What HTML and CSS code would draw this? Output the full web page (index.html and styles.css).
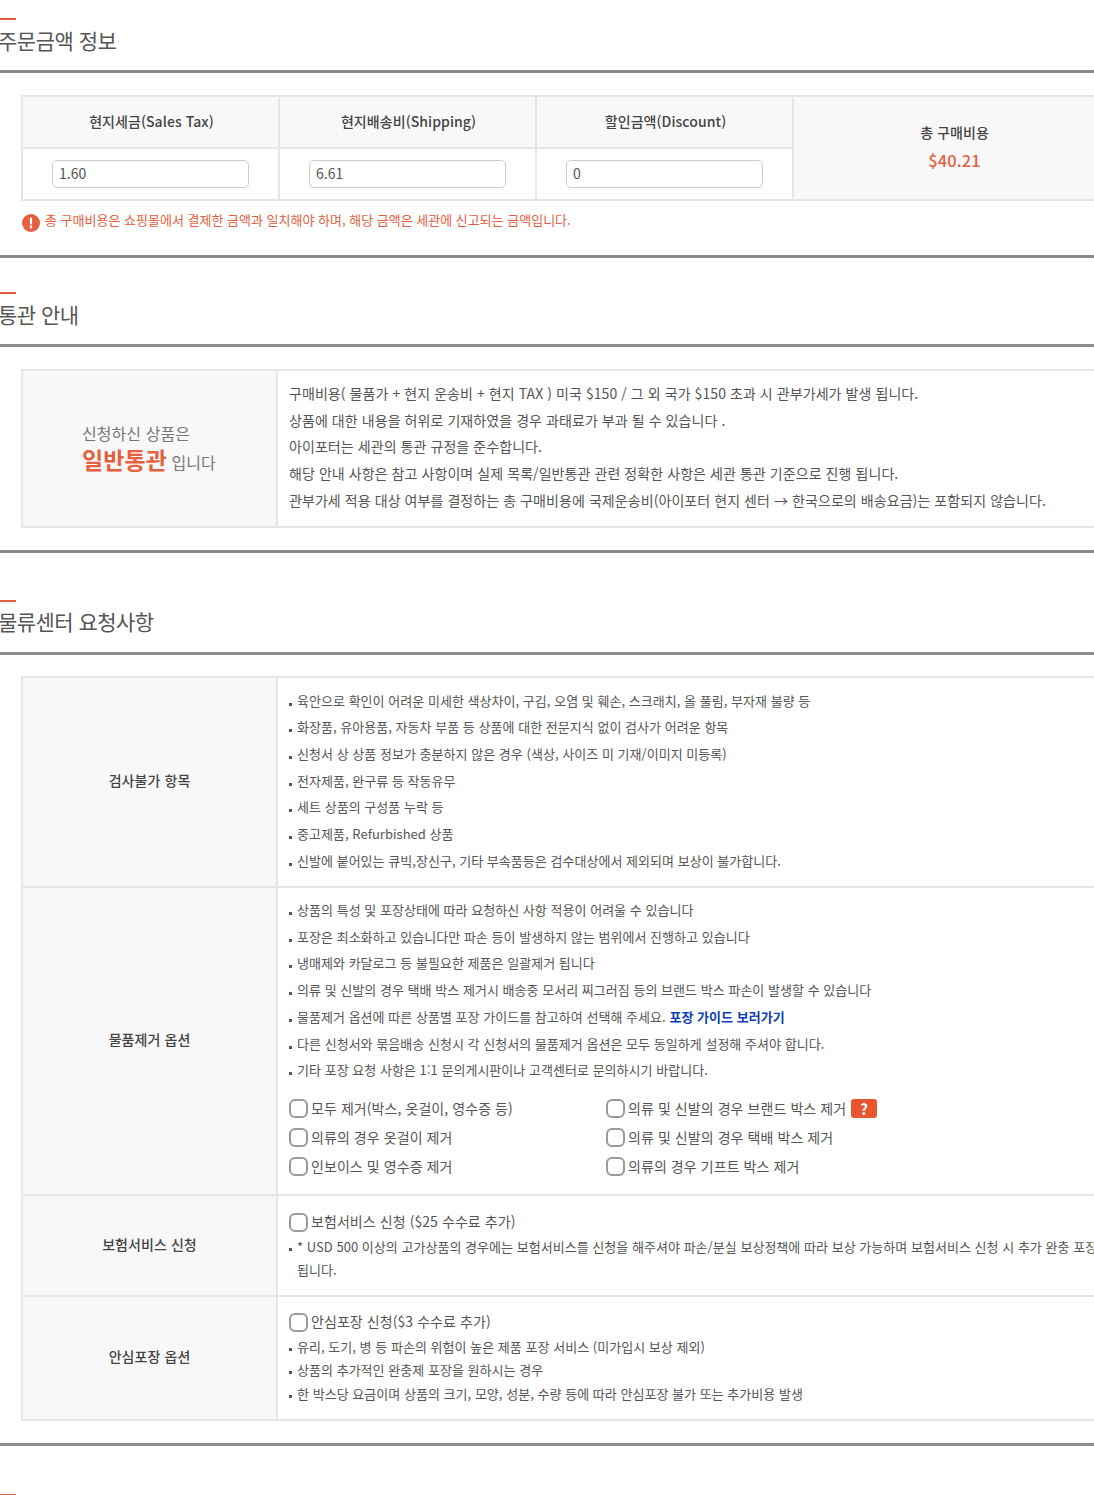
FILE: index.html
```html
<!DOCTYPE html>
<html lang="ko">
<head>
    <meta charset="UTF-8">
    <title>주문금액 정보</title>
    <link rel="stylesheet" href="styles.css">
</head>
<body>
    <div class="container">
        <div class="section section-order">
            <h2 class="title">주문금액 정보</h2>
            <table class="table table-price">
                <tr>
                    <th>현지세금(Sales Tax)</th>
                    <th>현지배송비(Shipping)</th>
                    <th>할인금액(Discount)</th>
                    <th class="total" rowspan="2">
                        <div>총 구매비용</div>
                        <div class="total-price">$40.21</div>
                    </th>
                </tr>
                <tr>
                    <td><input class="text-input" type="text" value="1.60"></td>
                    <td><input class="text-input" type="text" value="6.61"></td>
                    <td><input class="text-input" type="text" value="0"></td>
                </tr>
            </table>
            <p class="notice">
                <svg class="notice-icon" width="18" height="18" viewBox="0 0 18 18">
                    <circle cx="9" cy="9" r="9" fill="#e5603f"/>
                    <rect x="7.9" y="3.6" width="2.2" height="7" rx="1" fill="#fff"/>
                    <circle cx="9" cy="13" r="1.4" fill="#fff"/>
                </svg>
                <span>총 구매비용은 쇼핑몰에서 결제한 금액과 일치해야 하며, 해당 금액은 세관에 신고되는 금액입니다.</span>
            </p>
        </div>

        <div class="section section-customs">
            <h2 class="title">통관 안내</h2>
            <table class="table table-info">
                <tr>
                    <th class="customs">
                        <div class="customs-inner">
                            <div>신청하신 상품은</div>
                            <div><strong>일반통관</strong> <span>입니다</span></div>
                        </div>
                    </th>
                    <td class="customs-text">
                        <p>구매비용( 물품가 + 현지 운송비 + 현지 TAX ) 미국 $150 / 그 외 국가 $150 초과 시 관부가세가 발생 됩니다.</p>
                        <p>상품에 대한 내용을 허위로 기재하였을 경우 과태료가 부과 될 수 있습니다 .</p>
                        <p>아이포터는 세관의 통관 규정을 준수합니다.</p>
                        <p>해당 안내 사항은 참고 사항이며 실제 목록/일반통관 관련 정확한 사항은 세관 통관 기준으로 진행 됩니다.</p>
                        <p>관부가세 적용 대상 여부를 결정하는 총 구매비용에 국제운송비(아이포터 현지 센터 → 한국으로의 배송요금)는 포함되지 않습니다.</p>
                    </td>
                </tr>
            </table>
        </div>

        <div class="section section-request">
            <h2 class="title">물류센터 요청사항</h2>
            <table class="table table-info">
                <tr class="row-inspect">
                    <th>검사불가 항목</th>
                    <td>
                        <ul class="list">
                            <li>육안으로 확인이 어려운 미세한 색상차이, 구김, 오염 및 훼손, 스크래치, 올 풀림, 부자재 불량 등</li>
                            <li>화장품, 유아용품, 자동차 부품 등 상품에 대한 전문지식 없이 검사가 어려운 항목</li>
                            <li>신청서 상 상품 정보가 충분하지 않은 경우 (색상, 사이즈 미 기재/이미지 미등록)</li>
                            <li>전자제품, 완구류 등 작동유무</li>
                            <li>세트 상품의 구성품 누락 등</li>
                            <li>중고제품, Refurbished 상품</li>
                            <li>신발에 붙어있는 큐빅,장신구, 기타 부속품등은 검수대상에서 제외되며 보상이 불가합니다.</li>
                        </ul>
                    </td>
                </tr>
                <tr class="row-remove">
                    <th>물품제거 옵션</th>
                    <td>
                        <ul class="list">
                            <li>상품의 특성 및 포장상태에 따라 요청하신 사항 적용이 어려울 수 있습니다</li>
                            <li>포장은 최소화하고 있습니다만 파손 등이 발생하지 않는 범위에서 진행하고 있습니다</li>
                            <li>냉매제와 카달로그 등 불필요한 제품은 일괄제거 됩니다</li>
                            <li>의류 및 신발의 경우 택배 박스 제거시 배송중 모서리 찌그러짐 등의 브랜드 박스 파손이 발생할 수 있습니다</li>
                            <li>물품제거 옵션에 따른 상품별 포장 가이드를 참고하여 선택해 주세요. <a class="guide-link" href="#">포장 가이드 보러가기</a></li>
                            <li>다른 신청서와 묶음배송 신청시 각 신청서의 물품제거 옵션은 모두 동일하게 설정해 주셔야 합니다.</li>
                            <li>기타 포장 요청 사항은 1:1 문의게시판이나 고객센터로 문의하시기 바랍니다.</li>
                        </ul>
                        <div class="options">
                            <label class="check"><input type="checkbox">모두 제거(박스, 옷걸이, 영수증 등)</label>
                            <label class="check"><input type="checkbox">의류 및 신발의 경우 브랜드 박스 제거<span class="help">?</span></label>
                            <label class="check"><input type="checkbox">의류의 경우 옷걸이 제거</label>
                            <label class="check"><input type="checkbox">의류 및 신발의 경우 택배 박스 제거</label>
                            <label class="check"><input type="checkbox">인보이스 및 영수증 제거</label>
                            <label class="check"><input type="checkbox">의류의 경우 기프트 박스 제거</label>
                        </div>
                    </td>
                </tr>
                <tr class="row-insurance">
                    <th>보험서비스 신청</th>
                    <td>
                        <label class="check"><input type="checkbox">보험서비스 신청 ($25 수수료 추가)</label>
                        <ul class="list list-tight">
                            <li>* USD 500 이상의 고가상품의 경우에는 보험서비스를 신청을 해주셔야 파손/분실 보상정책에 따라 보상 가능하며 보험서비스 신청 시 추가 완충 포장 됩니다.</li>
                        </ul>
                    </td>
                </tr>
                <tr class="row-safe">
                    <th>안심포장 옵션</th>
                    <td>
                        <label class="check"><input type="checkbox">안심포장 신청($3 수수료 추가)</label>
                        <ul class="list list-tight">
                            <li>유리, 도기, 병 등 파손의 위험이 높은 제품 포장 서비스 (미가입시 보상 제외)</li>
                            <li>상품의 추가적인 완충제 포장을 원하시는 경우</li>
                            <li>한 박스당 요금이며 상품의 크기, 모양, 성분, 수량 등에 따라 안심포장 불가 또는 추가비용 발생</li>
                        </ul>
                    </td>
                </tr>
            </table>
        </div>

        <div class="next-bar"></div>
    </div>
</body>
</html>
```

FILE: styles.css
```css
html, body {
    margin: 0;
    height: 1495px;
    overflow: hidden;
    background: #fff;
}
body {
    font-family: "Noto Sans CJK KR", "Noto Sans", sans-serif;
    font-size: 14px;
    letter-spacing: 0.07px;
    color: #555;
}
.container {
    width: 1120px;
    margin-left: -2px;
    padding-top: 18px;
}
p, ul {
    margin: 0;
    padding: 0;
}
.section {
    box-sizing: border-box;
    border-bottom: 3px solid #8c8c8c;
}
.section-order {
    height: 240px;
}
.section-customs {
    margin-top: 34px;
    height: 261px;
}
.section-request {
    margin-top: 47px;
    height: 846px;
}
.title {
    box-sizing: border-box;
    height: 55px;
    margin: 0 0 22px;
    padding-top: 2px;
    border-bottom: 3px solid #8c8c8c;
    font-size: 21px;
    font-weight: 400;
    line-height: 40px;
    letter-spacing: -0.5px;
    color: #555;
    position: relative;
}
.section-request .title {
    margin-bottom: 21px;
    padding-top: 1px;
    letter-spacing: -0.55px;
}
.title::before {
    content: "";
    position: absolute;
    left: 0;
    top: 0;
    width: 18px;
    height: 2px;
    background: #e5603f;
}
.table {
    margin-left: 23px;
    width: 1096px;
    border-collapse: collapse;
    table-layout: fixed;
}
.table-price {
    width: 1094px;
}
.table th, .table td {
    box-sizing: border-box;
    border: 2px solid #e6e6e6;
}
.table th {
    background: #f8f8f8;
    font-weight: 500;
    color: #444;
}
.table-price th, .table-price td {
    width: 257px;
    height: 52px;
    padding: 0;
    text-align: center;
}
.table-price th {
    padding: 0 0 3px 2px;
}
.table-price th.total {
    width: auto;
    border-right: 0;
    padding: 0 0 3px;
}
.total-price {
    margin-top: 6px;
    font-size: 16.5px;
    color: #e5603f;
}
.text-input {
    display: block;
    width: 197px;
    height: 28px;
    box-sizing: border-box;
    margin: 0 auto;
    padding: 0 6px 2px;
    border: 1px solid #ccc;
    border-radius: 5px;
    font: inherit;
    color: #555;
}
.notice {
    display: flex;
    align-items: flex-start;
    gap: 5px;
    margin: 10px 0 0 24px;
    font-size: 13px;
    line-height: 18px;
    letter-spacing: 0;
    color: #e5603f;
}
.notice-icon {
    margin-top: 3px;
}
.table-info th {
    width: 255px;
    padding: 0 0 4px;
    text-align: center;
}
.table-info td {
    padding: 9.5px 11px 0;
    border-right: 0;
    vertical-align: top;
}
.table-info th.customs {
    padding-bottom: 2px;
}
.customs-inner {
    padding-left: 59px;
    text-align: left;
    font-weight: 400;
    font-size: 16px;
    color: #777;
    line-height: 26px;
}
.customs-inner strong {
    font-size: 23px;
    font-weight: 700;
    color: #e5603f;
}
.table-info .customs-text {
    height: 157px;
    padding-top: 9px;
    line-height: 26.7px;
}
.list {
    list-style: none;
    font-size: 13px;
    letter-spacing: 0.03px;
}
.list li {
    position: relative;
    padding-left: 8px;
    line-height: 26.7px;
}
.list li::before {
    content: "";
    position: absolute;
    left: 0;
    top: 15px;
    width: 3px;
    height: 3px;
    background: #555;
}
.row-inspect td {
    height: 210px;
}
.table-info .row-remove td {
    height: 308px;
    padding-top: 9px;
}
.table-info .row-insurance td {
    height: 101px;
    padding-top: 14px;
}
.table-info .row-safe td {
    height: 124px;
    padding-top: 13px;
}
.guide-link {
    color: #0b3fb5;
    font-weight: 700;
    text-decoration: none;
}
.options {
    display: grid;
    grid-template-columns: 317px 1fr;
    row-gap: 7px;
    margin-top: 13px;
}
.check {
    display: flex;
    align-items: center;
    gap: 3px;
    height: 22px;
}
.check input {
    appearance: none;
    width: 19px;
    height: 19px;
    margin: 2px 0 0;
    box-sizing: border-box;
    border: 2px solid #9a9a9a;
    border-radius: 6px;
    background: #fff;
}
.help {
    width: 26px;
    height: 19px;
    margin: 2px 0 0 2px;
    border-radius: 3px;
    background: #e8562f;
    color: #fff;
    font-weight: 700;
    font-size: 15px;
    line-height: 19px;
    text-align: center;
}
.list-tight {
    margin-top: 3px;
}
.list-tight li {
    line-height: 23.3px;
}
.list-tight li::before {
    top: 13px;
}
.next-bar {
    width: 18px;
    height: 2px;
    margin-top: 48px;
    background: #e5603f;
}
```
